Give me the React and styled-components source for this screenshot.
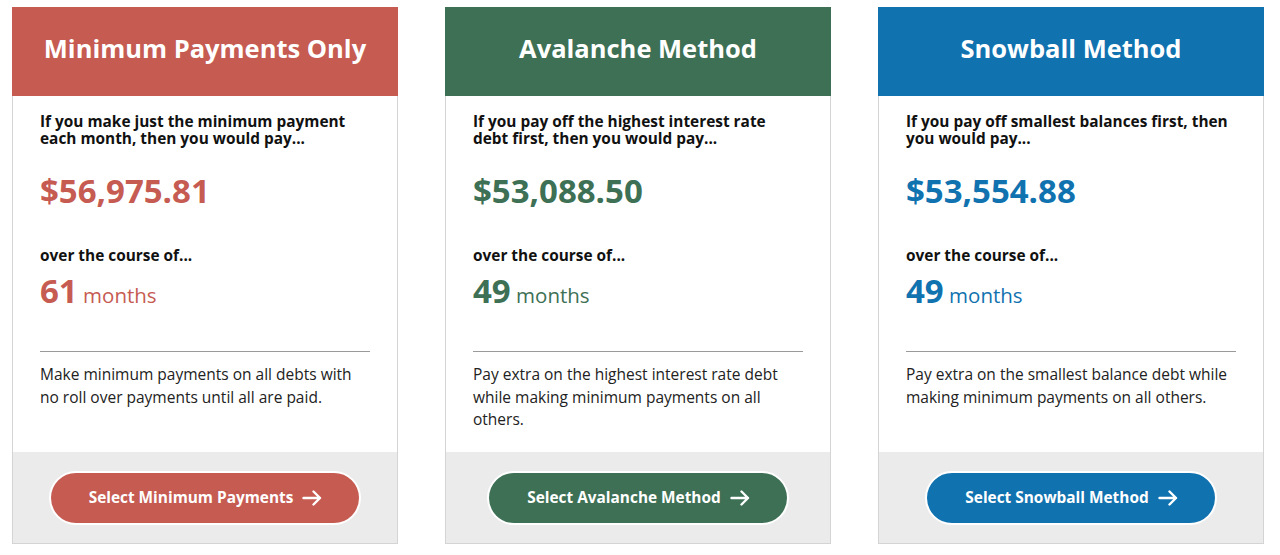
import React from "react";
import styled, { createGlobalStyle } from "styled-components";

const GlobalStyle = createGlobalStyle`
  body {
    margin: 0;
    background: #fff;
    font-family: "Open Sans", "Liberation Sans", sans-serif;
  }
`;

const plans = [
  {
    title: "Minimum Payments Only",
    color: "#c65b52",
    intro: "If you make just the minimum payment each month, then you would pay...",
    total: "$56,975.81",
    months: 61,
    desc: "Make minimum payments on all debts with no roll over payments until all are paid.",
    button: "Select Minimum Payments",
  },
  {
    title: "Avalanche Method",
    color: "#3d7054",
    intro: "If you pay off the highest interest rate debt first, then you would pay...",
    total: "$53,088.50",
    months: 49,
    desc: "Pay extra on the highest interest rate debt while making minimum payments on all others.",
    button: "Select Avalanche Method",
  },
  {
    title: "Snowball Method",
    color: "#1172b0",
    intro: "If you pay off smallest balances first, then you would pay...",
    total: "$53,554.88",
    months: 49,
    desc: "Pay extra on the smallest balance debt while making minimum payments on all others.",
    button: "Select Snowball Method",
  },
];

// arrow in the buttons, a bit wider than tall
const Arrow = () => (
  <svg width="20" height="16" viewBox="0 0 20 16" fill="none">
    <path
      d="M1.5 8H18M11.5 1.5L18 8L11.5 14.5"
      stroke="#fff"
      strokeWidth="2.4"
      strokeLinecap="round"
      strokeLinejoin="round"
    />
  </svg>
);

export default function App() {
  return (
    <>
      <GlobalStyle />
      <Page>
        {plans.map((p) => (
          <Card key={p.title}>
            <Header color={p.color}>{p.title}</Header>
            <Body>
              <Intro>{p.intro}</Intro>
              <Total color={p.color}>{p.total}</Total>
              <Label>over the course of...</Label>
              <Months color={p.color}>
                <strong>{p.months}</strong> months
              </Months>
              <Divider />
              <Desc>{p.desc}</Desc>
            </Body>
            <Footer>
              <SelectButton color={p.color}>
                {p.button}
                <Arrow />
              </SelectButton>
            </Footer>
          </Card>
        ))}
      </Page>
    </>
  );
}

const Page = styled.div`
  display: flex;
  gap: 47px;
  padding: 7px 0 0 12px;
`;

const Card = styled.div`
  width: 386px;
  height: 537px;
  box-sizing: border-box;
  border: 1px solid #d4d4d4;
  border-top: 0;
  display: flex;
  flex-direction: column;
`;

const Header = styled.div`
  height: 89px;
  box-sizing: border-box;
  padding-bottom: 7px;
  margin: 0 -1px;
  background: ${(p) => p.color};
  color: #fff;
  font-size: 25.5px;
  font-weight: 700;
  display: flex;
  align-items: center;
  justify-content: center;
`;

const Body = styled.div`
  flex: 1;
  padding: 17px 27px 0 27px;
`;

const Intro = styled.p`
  margin: 0;
  font-size: 15.4px;
  line-height: 17px;
  font-weight: 700;
  color: #111;
`;

const Total = styled.div`
  margin-top: 25px;
  font-size: 33px;
  line-height: 37px;
  font-weight: 700;
  color: ${(p) => p.color};
`;

const Label = styled.div`
  margin-top: 37px;
  font-size: 15.4px;
  line-height: 20px;
  font-weight: 700;
  color: #111;
`;

const Months = styled.div`
  margin-top: 6px;
  font-size: 20.5px;
  line-height: 38px;
  color: ${(p) => p.color};
  strong {
    font-size: 33px;
    font-weight: 700;
  }
`;

const Divider = styled.hr`
  margin: 37px 0 0;
  border: 0;
  border-top: 1px solid #9a9a9a;
`;

const Desc = styled.p`
  margin: 11px 0 0;
  font-size: 15.5px;
  line-height: 22.5px;
  color: #222;
`;

const Footer = styled.div`
  height: 91px;
  background: #ebebeb;
  display: flex;
  align-items: center;
  justify-content: center;
`;

const SelectButton = styled.button`
  height: 54px;
  padding: 0 37px 0 38px;
  border: 2px solid #fff;
  border-radius: 27px;
  background: ${(p) => p.color};
  color: #fff;
  font-family: inherit;
  font-size: 15.4px;
  font-weight: 700;
  display: flex;
  align-items: center;
  gap: 9px;
  cursor: pointer;
`;
